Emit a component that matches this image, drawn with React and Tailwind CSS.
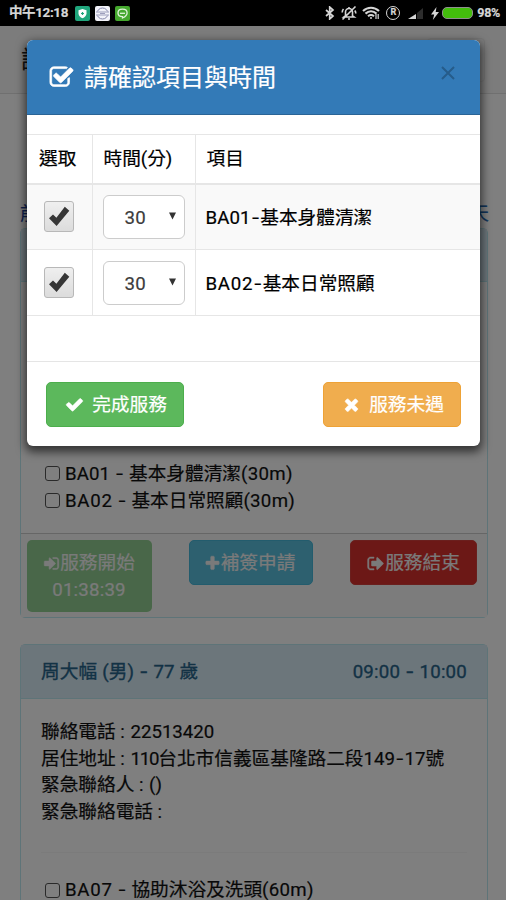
import React, { useState } from 'react';

// Font Awesome 4 glyphs on the 1792 grid
const ICONS = {
    checkSquare: 'M1472 930v318q0 119-84.5 203.5t-203.5 84.5h-832q-119 0-203.5-84.5t-84.5-203.5v-832q0-119 84.5-203.5t203.5-84.5h832q63 0 117 25 15 7 18 23 3 17-9 29l-49 49q-10 10-23 10-3 0-9-2-23-6-45-6h-832q-66 0-113 47t-47 113v832q0 66 47 113t113 47h832q66 0 113-47t47-113v-254q0-13 9-22l64-64q10-10 23-10 6 0 12 3 20 8 20 29zm231-489l-814 814q-24 24-57 24t-57-24l-430-430q-24-24-24-57t24-57l110-110q24-24 57-24t57 24l263 263 647-647q24-24 57-24t57 24l110 110q24 24 24 57t-24 57z',
    check: 'M1671 566q0 40-28 68l-724 724-136 136q-28 28-68 28t-68-28l-136-136-362-362q-28-28-28-68t28-68l136-136q28-28 68-28t68 28l294 295 656-657q28-28 68-28t68 28l136 136q28 28 28 68z',
    times: 'M1490 1322q0 40-28 68l-136 136q-28 28-68 28t-68-28l-294-294-294 294q-28 28-68 28t-68-28l-136-136q-28-28-28-68t28-68l294-294-294-294q-28-28-28-68t28-68l136-136q28-28 68-28t68 28l294 294 294-294q28-28 68-28t68 28l136 136q28 28 28 68t-28 68l-294 294 294 294q28 28 28 68z',
    plus: 'M1600 736v192q0 40-28 68t-68 28h-416v416q0 40-28 68t-68 28h-192q-40 0-68-28t-28-68v-416h-416q-40 0-68-28t-28-68v-192q0-40 28-68t68-28h416v-416q0-40 28-68t68-28h192q40 0 68 28t28 68v416h416q40 0 68 28t28 68z',
    signOut: 'M704 1440q0 4 1 20t.5 26.5-3 23.5-10 19.5-20.5 6.5h-320q-119 0-203.5-84.5t-84.5-203.5v-704q0-119 84.5-203.5t203.5-84.5h320q13 0 22.5 9.5t9.5 22.5q0 4 1 20t.5 26.5-3 23.5-10 19.5-20.5 6.5h-320q-66 0-113 47t-47 113v704q0 66 47 113t113 47h312l11.5 1 11.5 3 8 5.5 7 9 2 13.5zm928-544q0 26-19 45l-544 544q-19 19-45 19t-45-19-19-45v-288h-448q-26 0-45-19t-19-45v-384q0-26 19-45t45-19h448v-288q0-26 19-45t45-19 45 19l544 544q19 19 19 45z',
    signIn: 'M1312 896q0 26-19 45l-544 544q-19 19-45 19t-45-19-19-45v-288h-448q-26 0-45-19t-19-45v-384q0-26 19-45t45-19h448v-288q0-26 19-45t45-19 45 19l544 544q19 19 19 45zm352-352v704q0 119-84.5 203.5t-203.5 84.5h-320q-13 0-22.5-9.5t-9.5-22.5q0-4-1-20t-.5-26.5 3-23.5 10-19.5 20.5-6.5h320q66 0 113-47t47-113v-704q0-66-47-113t-113-47h-312l-11.5-1-11.5-3-8-5.5-7-9-2-13.5q0-4-1-20t-.5-26.5 3-23.5 10-19.5 20.5-6.5h320q119 0 203.5 84.5t84.5 203.5z',
};

const Fa = ({ name, className }) => (
    <svg viewBox="0 0 1792 1792" fill="currentColor" stroke="currentColor" strokeWidth="50" className={className}>
        <path d={ICONS[name]} />
    </svg>
);

const Dash = () => <span className="font-['Inter'] px-[0.5px]">-</span>;

const Code = ({ children }) => (
    <span className={children.endsWith('1') ? 'tracking-[0.1px]' : 'tracking-[0.7px]'}>{children}</span>
);

const StatusBar = () => (
    <header className="h-[26px] shrink-0 bg-black text-[#d6d6d6] flex items-center justify-between pl-[9px] pr-[6px]">
        <div className="flex items-center">
            <span className="text-[13.5px] leading-none font-bold w-[60px] whitespace-nowrap tracking-[-0.4px]">中午12:18</span>
            <div className="flex gap-[5px] ml-[6px]">
                <svg viewBox="0 0 15 15" className="w-[15px] h-[15px]">
                    <rect width="15" height="15" rx="2" fill="#20a67c" />
                    <path d="M7.5 3l4 1.2v3.3c0 2.2-1.7 3.8-4 4.8-2.3-1-4-2.6-4-4.8V4.2z" fill="#fff" />
                    <path d="M7.5 6v3M6 7.5h3" stroke="#20a67c" strokeWidth="1.2" />
                </svg>
                <svg viewBox="0 0 15 15" className="w-[15px] h-[15px]">
                    <rect width="15" height="15" rx="2" fill="#f3f3fa" />
                    <circle cx="7.5" cy="7.5" r="5.5" fill="none" stroke="#8688ac" />
                    <path d="M1 5.500h13v4H1z" fill="#f3f3fa" />
                    <path d="M1 6h13M1 9h13M5 7.500h5" stroke="#8688ac" strokeWidth="0.8" />
                </svg>
                <svg viewBox="0 0 15 15" className="w-[15px] h-[15px]">
                    <rect width="15" height="15" rx="2" fill="#45a82e" />
                    <path d="M7.5 3.200c3 0 4.600 1.500 4.600 3.700 0 2.400-2.300 4-4.600 5.100V10.700C4.800 10.600 3 9.300 3 7s1.700-3.800 4.500-3.800z" fill="none" stroke="#dff3d9" strokeWidth="1.3" />
                    <path d="M5 7.300h5" stroke="#dff3d9" strokeWidth="1.3" />
                </svg>
            </div>
        </div>
        <div className="flex items-center">
            <svg viewBox="0 0 10 14" className="w-[10px] h-[14px]" fill="none" stroke="currentColor" strokeWidth="1.7">
                <path d="M1 4l7 6-3.300 3V1L8 4l-7 6" />
            </svg>
            <svg viewBox="0 0 16 16" className="w-[16px] h-[16px] ml-[6px]" fill="none" stroke="currentColor" strokeWidth="1.6">
                <path d="M4.500 11V7a3.500 3.500 0 017 0v4l1.500 1H3zM7 14h2M14.500 1.500l-13 13M8 3.500V2M2.500 4C1.500 5 1.200 6 1.200 7.500M13.800 5.500c.8 1 1 2 1 3" />
            </svg>
            <svg viewBox="0 0 18 14" className="w-[18px] h-[14px] ml-[5px]" fill="none" stroke="currentColor" strokeWidth="2.1">
                <path d="M1 5c4.500-4.300 11.500-4.300 16 0M3.500 7.600c3.300-3 7.700-3 11 0M6 10.200c2-1.600 4-1.600 6 0" />
                <circle cx="9" cy="12" r="1" fill="currentColor" stroke="none" />
                <path d="M14 8v5M16.200 8v5" strokeWidth="1.2" />
            </svg>
            <div className="w-[14px] h-[14px] ml-[6px] rounded-full border-[1.5px] border-[#d6d6d6] text-[9px] font-bold leading-[11px] text-center">R</div>
            <svg viewBox="0 0 16 14" className="w-[16px] h-[14px] ml-[8px]">
                <path d="M0 13l8-5v5z" fill="#d6d6d6" />
                <path d="M9 13V7l6-5v11z" fill="#2d2d2d" />
            </svg>
            <svg viewBox="0 0 8 13" className="w-[8px] h-[13px] ml-[7px]" fill="currentColor">
                <path d="M5.500 0L0 7.500h3.200L1.800 13 8 5H4.700z" />
            </svg>
            <div className="w-[31px] h-[12px] ml-[3px] rounded-[5px] border-[1.5px] border-[#8f8f8f] bg-[#43bd0c]" />
            <span className="text-[12.5px] font-bold leading-none ml-[4px] tracking-[-0.3px]">98%</span>
        </div>
    </header>
);

const TaskLine = ({ code, label, minutes }) => (
    <label className="flex items-center h-[26.7px] pl-[4px] whitespace-nowrap">
        <span className="w-[15px] h-[15px] mr-[5px] shrink-0 border-[1.5px] border-[#555] rounded-[3px]" />
        <span className="pt-[1px]">
            <Code>{code}</Code> <Dash /> {label}<span className="tracking-[0.3px]">({minutes}m)</span>
        </span>
    </label>
);

const Page = () => (
    <div className="h-[874px] bg-white overflow-hidden">
        <nav className="h-[68px] bg-[#f8f8f8] border-b border-[#e0e0e0] px-[21px] flex items-center justify-between">
            <span className="text-[24px] text-[#222]">訪視</span>
            <span className="w-[58px] h-[44px] rounded border border-[#ececec]" />
        </nav>
        <div className="h-[134px] flex items-end justify-between pl-[20px] pr-[17px] pb-[1px] leading-[26px]">
            <span className="text-[#1b3f9c]">前一天</span>
            <span className="text-[#2268b4]">後一天</span>
        </div>
        <section className="mx-[20px] w-[468px] h-[390px] border border-[#bce8f1] rounded-[5px] flex flex-col">
            <div className="h-[53px] bg-[#d9edf7] border-b border-[#bce8f1]" />
            <div className="grow flex flex-col justify-end px-[20px] pb-[19px]">
                <TaskLine code="BA01" label="基本身體清潔" minutes="30" />
                <TaskLine code="BA02" label="基本日常照顧" minutes="30" />
            </div>
            <div className="h-[84px] shrink-0 bg-[#f8f8f8] border-t border-[#ccc] pt-[6px] pl-[6px] pr-[10px] flex items-start justify-between text-[#f4f4f4]">
                <button className="w-[125px] h-[72px] rounded-[5px] bg-[#92ce92] leading-[26.7px] pt-[1px] pr-[1px]">
                    <span className="flex items-center justify-center"><Fa name="signIn" className="w-[17px] h-[19px]" />服務開始</span>
                    <span className="block tracking-[0.2px]">01:38:39</span>
                </button>
                <button className="w-[124px] h-[45px] rounded-[5px] bg-[#5bc0de] border border-[#46b8da] flex items-center justify-center pr-[3px] pt-[1px]">
                    <Fa name="plus" className="w-[17px] h-[19px]" />補簽申請
                </button>
                <button className="w-[127px] h-[45px] rounded-[5px] bg-[#d9302c] border border-[#d43f3a] flex items-center justify-center pt-[1px]">
                    <Fa name="signOut" className="w-[18px] h-[19px]" />服務結束
                </button>
            </div>
        </section>
        <section className="mx-[20px] mt-[26px] w-[468px] h-[300px] border border-[#bce8f1] rounded-[5px]">
            <div className="h-[54px] bg-[#d9edf7] border-b border-[#bce8f1] px-[20px] pt-[1px] flex items-center justify-between text-[#27648a] [-webkit-text-stroke:0.35px_#27648a]">
                <span className="tracking-[0.15px]">周大幅 (男) <Dash /> 77 歲</span>
                <span className="tracking-[0.2px]">09:00 <Dash /> 10:00</span>
            </div>
            <div className="px-[20px] pt-[20px] leading-[26.7px] whitespace-nowrap">
                <p>聯絡電話 <span className="mr-[1px]">:</span> 22513420</p>
                <p>居住地址 <span className="mr-[1px]">:</span> <span className="tracking-[-1.2px]">110</span>台北市信義區基隆路二段149<Dash />17號</p>
                <p>緊急聯絡人 <span className="mr-[1px]">:</span> ()</p>
                <p>緊急聯絡電話 :</p>
                <hr className="mt-[26px] mb-[24px] border-[#f6f6f6]" />
                <TaskLine code="BA07" label="協助沐浴及洗頭" minutes="60" />
            </div>
        </section>
    </div>
);

const TaskRow = ({ name, code, striped }) => {
    const [checked, setChecked] = useState(true);
    return (
        <tr className={striped ? 'h-[66px] bg-[#f9f9f9]' : 'h-[66px]'}>
            <td className="border-y border-r border-[#e6e6e6] pl-[17px]">
                <button
                    onClick={() => setChecked(!checked)}
                    className="w-[30px] h-[31px] border border-[#b8b8b8] rounded-[3px] bg-linear-to-b from-[#efefef] to-[#dcdcdc] flex items-center justify-center"
                >
                    {checked && (
                        <svg viewBox="0 0 22 21" className="w-[22px] h-[21px]">
                            <path d="M1 12.300l4-3.800 3.400 3.300L16.800.8l4.500 4L8.600 20z" fill="#363636" />
                        </svg>
                    )}
                </button>
            </td>
            <td className="border border-[#e6e6e6] pl-[10px]">
                <div className="w-[82px] h-[44px] border-[1.5px] border-[#ccc] rounded-[6px] bg-white flex items-center pl-[21px] text-[#3c3c3c]">
                    <span className="pt-[2px] tracking-[0.3px]">30</span>
                    <svg viewBox="0 0 8 8" className="w-[7px] h-[8px] ml-[23px] mb-[2px]"><path d="M0 0h8L4 8z" fill="#333" /></svg>
                </div>
            </td>
            <td className="border-y border-l border-[#e6e6e6] pl-[10px] pt-[2px]">
                <Code>{code}</Code><Dash />{name}
            </td>
        </tr>
    );
};

const ConfirmModal = () => (
    <div className="absolute top-[40px] left-[27px] w-[453px] h-[406px] bg-white rounded-[6px] overflow-hidden shadow-[0_4px_10px_2px_rgba(0,0,0,0.6)] flex flex-col">
        <div className="h-[75px] shrink-0 bg-[#337ab7] border-b border-[#2a6496] text-white flex items-center justify-between pl-[22px] pr-[25px]">
            <h4 className="flex items-center text-[24px] pt-[2px]">
                <Fa name="checkSquare" className="w-[25px] h-[25px] mr-[10px] mb-[2px]" />
                請確認項目與時間
            </h4>
            <svg viewBox="0 0 14 14" className="w-[14px] h-[14px] mb-[9px]" stroke="#265c8a" strokeWidth="2">
                <path d="M1 1l12 12M13 1L1 13" />
            </svg>
        </div>
        <table className="mt-[19px] w-full border-collapse table-fixed text-black">
            <colgroup>
                <col className="w-[65px]" />
                <col className="w-[103px]" />
                <col />
            </colgroup>
            <thead>
                <tr className="h-[49px] border-t border-b-2 border-[#e6e6e6] text-left">
                    <th className="font-normal pl-[12px] pt-[1px] border-r border-[#e6e6e6]">選取</th>
                    <th className="font-normal pl-[11px] pt-[1px] border-r border-[#e6e6e6]">時間(分)</th>
                    <th className="font-normal pl-[11px] pt-[1px]">項目</th>
                </tr>
            </thead>
            <tbody>
                <TaskRow code="BA01" name="基本身體清潔" striped />
                <TaskRow code="BA02" name="基本日常照顧" />
            </tbody>
        </table>
        <div className="mt-auto h-[85px] shrink-0 border-t border-[#e5e5e5] px-[19px] pt-[20px] flex items-start justify-between text-white">
            <button className="w-[138px] h-[45px] rounded-[5px] bg-[#5cb85c] border border-[#4cae4c] flex items-center justify-center pl-[2px]">
                <Fa name="check" className="w-[19px] h-[19px] mr-[8px]" />完成服務
            </button>
            <button className="w-[138px] h-[45px] rounded-[5px] bg-[#f0ad4e] border border-[#eea236] flex items-center justify-center pl-[2px]">
                <Fa name="times" className="w-[19px] h-[19px] mr-[8px]" />服務未遇
            </button>
        </div>
    </div>
);

export default function App() {
    return (
        <div className="relative w-[506px] h-[900px] overflow-hidden flex flex-col font-['Roboto','Noto_Sans_CJK_TC',sans-serif] text-[18.67px] text-[#111] [-webkit-text-stroke:0.2px]">
            <StatusBar />
            <Page />
            <div className="absolute inset-x-0 top-[26px] bottom-0 bg-black/50" />
            <ConfirmModal />
        </div>
    );
}
